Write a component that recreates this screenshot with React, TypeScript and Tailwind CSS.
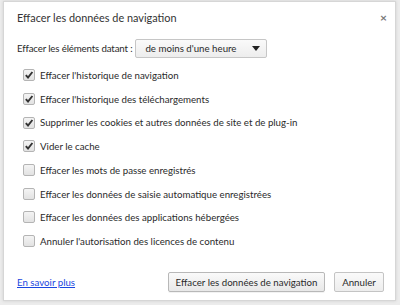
import React, { useState } from 'react';

const options = [
  { label: "Effacer l'historique de navigation", checked: true },
  { label: "Effacer l'historique des téléchargements", checked: true },
  { label: 'Supprimer les cookies et autres données de site et de plug-in', checked: true },
  { label: 'Vider le cache', checked: true },
  { label: 'Effacer les mots de passe enregistrés', checked: false },
  { label: 'Effacer les données de saisie automatique enregistrées', checked: false },
  { label: 'Effacer les données des applications hébergées', checked: false },
  { label: "Annuler l'autorisation des licences de contenu", checked: false },
];

const Checkbox = ({ checked, onClick }: { checked: boolean; onClick: () => void }) => (
  <button
    onClick={onClick}
    className="w-[12px] h-[12px] rounded-[2px] border border-[#b4b4b4] bg-gradient-to-b from-[#f4f4f4] to-[#e2e2e2] flex items-center justify-center shrink-0"
  >
    {checked && (
      <svg width="10" height="10" viewBox="0 0 10 10">
        <path d="M1.8 5.2 L4 7.5 L8.4 2" fill="none" stroke="#333" strokeWidth="1.9" />
      </svg>
    )}
  </button>
);

export default function App() {
  const [checks, setChecks] = useState(options.map((o) => o.checked));

  return (
    <div className="w-[400px] h-[305px] bg-[#ececec] pt-[1px] pl-[3px] font-['Lato',sans-serif] text-[#2a2a2a]">
      <div className="w-[393px] h-[300px] bg-white border border-[#d6d6d6] shadow-[0_0_3px_rgba(0,0,0,0.12)] flex flex-col">
        <div className="flex items-start justify-between pl-[13px] pr-[8px] pt-[8px]">
          <h1 className="text-[10.9px] leading-[16px] text-[#333] font-normal">Effacer les données de navigation</h1>
          <span className="text-[#777] text-[12px] font-bold leading-none mt-[2px]">×</span>
        </div>

        <div className="flex items-center pl-[13px] mt-[13px] text-[9.7px]">
          <span className="tracking-[-0.15px]">Effacer les éléments datant :</span>
          <div className="ml-[3px] w-[132px] h-[19px] border border-[#c6c6c6] rounded-[2px] bg-gradient-to-b from-[#fafafa] to-[#ededed] flex items-center justify-between pl-[9px] pr-[6px]">
            <span>de moins d'une heure</span>
            <svg width="8" height="5" viewBox="0 0 8 5">
              <path d="M0 0 H8 L4 5 Z" fill="#222" />
            </svg>
          </div>
        </div>

        <div className="flex flex-col mt-[11px] pl-[19px] gap-[11px] text-[9.7px]">
          {options.map((o, i) => (
            <label key={o.label} className="flex items-center h-[12.7px]">
              <Checkbox
                checked={checks[i]}
                onClick={() => setChecks(checks.map((c, j) => (j === i ? !c : c)))}
              />
              <span className="ml-[5px] whitespace-nowrap">{o.label}</span>
            </label>
          ))}
        </div>

        <div className="flex items-center mt-auto mb-[8px] pl-[13px] pr-[11px] text-[9.7px]">
          <a href="#" className="text-[#1a47e0] underline">En savoir plus</a>
          <button className="ml-auto h-[20px] w-[157px] border border-[#b8b8b8] rounded-[2px] bg-gradient-to-b from-[#fafafa] to-[#e8e8e8] shadow-[0_1px_0_rgba(0,0,0,0.05)]">
            Effacer les données de navigation
          </button>
          <button className="ml-[9px] h-[20px] w-[50px] border border-[#c4c4c4] rounded-[2px] bg-gradient-to-b from-[#fafafa] to-[#ededed]">
            Annuler
          </button>
        </div>
      </div>
    </div>
  );
}
